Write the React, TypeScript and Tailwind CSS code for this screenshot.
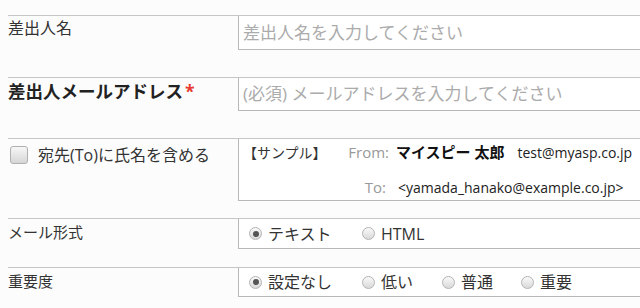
import React from "react";

const font = { fontFamily: '"Open Sans", "Noto Sans CJK JP", sans-serif' };

function Radio({ checked }: { checked?: boolean }) {
  return (
    <span className="relative inline-flex h-[13px] w-[13px] shrink-0 items-center justify-center rounded-full border border-[#b4b4b4] bg-gradient-to-b from-[#fafafa] to-[#d9d9d9]">
      {checked && <span className="h-[6px] w-[6px] rounded-full bg-[#555]" />}
    </span>
  );
}

function RadioItem({ label, checked, w }: { label: string; checked?: boolean; w: string }) {
  return (
    <span className={`flex items-center gap-[6px] ${w}`}>
      <Radio checked={checked} />
      <span className="text-[16px] leading-[24px] text-[#333]">{label}</span>
    </span>
  );
}

export default function App() {
  return (
    <div className="h-[308px] w-[640px] overflow-hidden bg-[#fcfcfc] pt-[15px]" style={font}>
      {/* Row 1 */}
      <div className="ml-2 mb-[27px] flex border-t border-[#c6c6c6]">
        <div className="w-[230px] text-[16px] leading-[24px] text-[#333]">差出人名</div>
        <div className="flex h-[34px] flex-1 items-center border-b border-l border-[#b8b8b8] bg-white pl-[4px]">
          <span className="text-[17px] leading-[24px] text-[#ababab]">差出人名を入力してください</span>
        </div>
      </div>
      {/* Row 2 */}
      <div className="ml-2 mb-[27px] flex border-t border-[#c6c6c6]">
        <div className="w-[230px] pt-[1px] text-[17.5px] font-bold leading-[24px] text-[#222]">
          差出人メールアドレス<span className="ml-[2px] text-[#e8382f]">*</span>
        </div>
        <div className="flex h-[33px] flex-1 items-center border-b border-l border-[#b8b8b8] bg-white pl-[4px]">
          <span className="text-[17px] leading-[24px] text-[#ababab]">(必須) メールアドレスを入力してください</span>
        </div>
      </div>
      {/* Row 3 */}
      <div className="ml-2 mb-[17px] flex border-t border-[#c6c6c6]">
        <div className="flex w-[230px] items-start gap-[10px] pl-[2px] pt-[6px]">
          <span className="mt-[1px] h-[18px] w-[18px] rounded-[3px] border border-[#b0b0b0] bg-gradient-to-b from-[#f7f7f7] to-[#d6d6d6]" />
          <span className="text-[16px] leading-[20px] text-[#333]">宛先(To)に氏名を含める</span>
        </div>
        <div className="flex h-[62px] flex-1 flex-col border-b border-l border-[#b8b8b8] bg-white pl-[4px]">
          <div className="flex h-[26px] items-center">
            <span className="w-[100px] text-[14px] text-[#333]">【サンプル】</span>
            <span className="w-[46px] text-right text-[15px] text-[#999]">From:</span>
            <span className="ml-[7px] text-[15px] font-bold text-[#111]">マイスピー 太郎</span>
            <span className="ml-[13px] text-[14px] text-[#222]">test@myasp.co.jp</span>
          </div>
          <div className="mt-[9px] flex h-[26px] items-center">
            <span className="w-[143px] text-right text-[15px] text-[#999]">To:</span>
            <span className="ml-[12px] text-[14px] text-[#222]">&lt;yamada_hanako@example.co.jp&gt;</span>
          </div>
        </div>
      </div>
      {/* Row 4 */}
      <div className="ml-2 mb-[18px] flex border-t border-[#c6c6c6]">
        <div className="w-[230px] pt-[1px] text-[15px] leading-[24px] text-[#333]">メール形式</div>
        <div className="flex h-[30px] flex-1 items-center border-b border-l border-[#b8b8b8] bg-white pl-[10px]">
          <RadioItem label="テキスト" checked w="w-[113px]" />
          <RadioItem label="HTML" w="w-[80px]" />
        </div>
      </div>
      {/* Row 5 */}
      <div className="ml-2 flex border-t border-[#c6c6c6]">
        <div className="w-[230px] pt-[1px] text-[15px] leading-[24px] text-[#333]">重要度</div>
        <div className="flex h-[29px] flex-1 items-center border-b border-l border-[#b8b8b8] bg-white pl-[10px]">
          <RadioItem label="設定なし" checked w="w-[113px]" />
          <RadioItem label="低い" w="w-[80px]" />
          <RadioItem label="普通" w="w-[79px]" />
          <RadioItem label="重要" w="w-[80px]" />
        </div>
      </div>
    </div>
  );
}
